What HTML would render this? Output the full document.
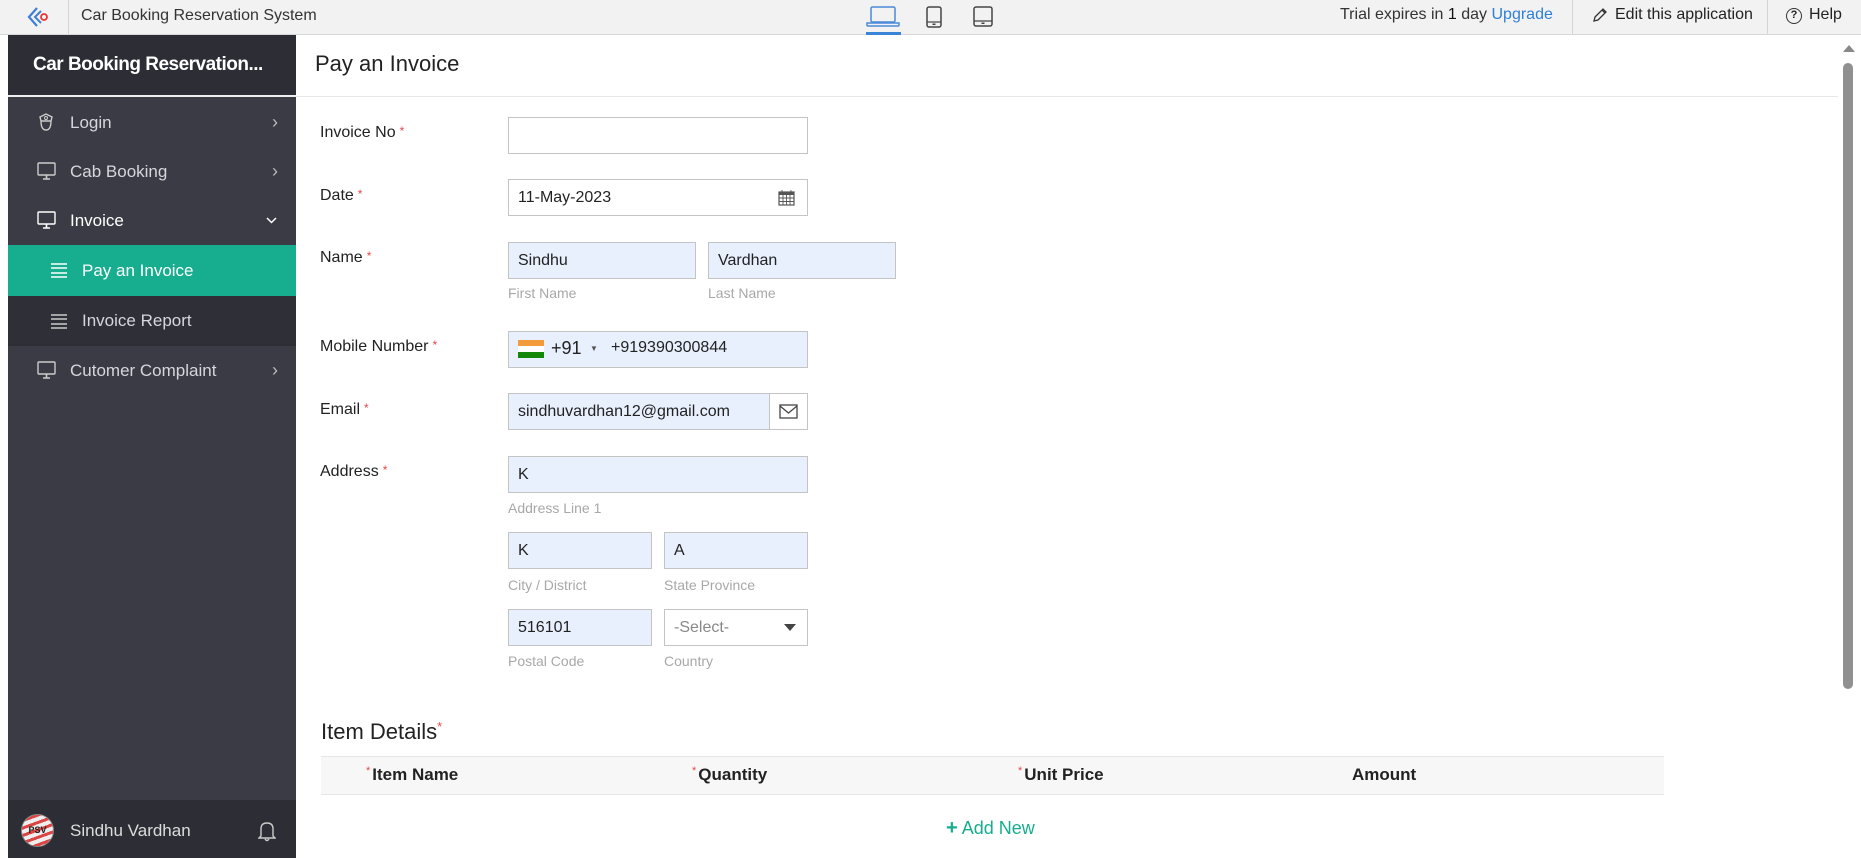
<!DOCTYPE html>
<html><head><meta charset="utf-8"><style>
*{box-sizing:border-box;margin:0;padding:0}
body{width:1861px;height:858px;overflow:hidden;font-family:"Liberation Sans",sans-serif;background:#fff;position:relative;color:#222}
.a{position:absolute}
.top{left:0;top:0;width:1861px;height:35px;background:#f2f2f2;border-bottom:1px solid #d8d8d8}
.sb{left:8px;top:35px;width:288px;height:823px;background:#3b3b45}
.mi{position:absolute;left:0;width:288px;height:49px;color:#d6d6dc;font-size:17px;line-height:49px}
.mi .t{position:absolute;left:62px}
.mi .ch{position:absolute;right:18px;font-size:18px;color:#bbb}
.lbl{position:absolute;left:320px;font-size:16px;color:#222}
.lbl i{color:#e5474a;font-style:normal;font-size:12px;vertical-align:top;margin-left:4px}
.in{position:absolute;height:37px;border:1px solid #c4c4c4;background:#e8f0fd;font-size:16px;line-height:35px;padding-left:9px;color:#222}
.hp{position:absolute;font-size:14px;color:#a8a8a8}
.th{position:absolute;top:765px;font-size:17px;font-weight:bold;color:#222}
.th i{color:#e5474a;font-style:normal;font-size:11px;vertical-align:top;font-weight:normal;margin-right:2px}
</style></head><body>
<div class="a top"></div>
<div class="a" style="left:68px;top:0;width:1px;height:34px;background:#d4d4d4"></div>
<svg class="a" style="left:26px;top:6px" width="24" height="22" viewBox="0 0 24 22"><path d="M11 2 L3 11 L11 20" fill="none" stroke="#3d7fd8" stroke-width="2.2"/><path d="M15 5 L9 11 L15 17" fill="none" stroke="#3d7fd8" stroke-width="2"/><circle cx="18" cy="11" r="3" fill="none" stroke="#e33" stroke-width="1.8"/></svg>
<div class="a" style="left:81px;top:7px;font-size:16px;color:#333">Car Booking Reservation System</div>
<svg class="a" style="left:866px;top:6px" width="34" height="22" viewBox="0 0 34 22"><rect x="5" y="1" width="24" height="15" rx="1.5" fill="none" stroke="#4a8ad8" stroke-width="1.5"/><path d="M1 17 H33 V19 Q33 20 32 20 H2 Q1 20 1 19 Z" fill="none" stroke="#4a8ad8" stroke-width="1.5"/></svg>
<div class="a" style="left:866px;top:32px;width:35px;height:3px;background:#3a86d6"></div>
<svg class="a" style="left:926px;top:6px" width="16" height="22" viewBox="0 0 16 22"><rect x="1" y="1" width="14" height="20" rx="2" fill="none" stroke="#444" stroke-width="1.5"/><path d="M1 16 H15" stroke="#444" stroke-width="1.2"/><rect x="6.5" y="17.5" width="3" height="1.5" fill="#444"/></svg>
<svg class="a" style="left:973px;top:6px" width="20" height="22" viewBox="0 0 20 22"><rect x="1" y="1" width="18" height="19" rx="2" fill="none" stroke="#444" stroke-width="1.5"/><path d="M1 15 H19" stroke="#444" stroke-width="1.2"/><rect x="8.5" y="16.5" width="3" height="1.5" fill="#444"/></svg>
<div class="a" style="left:1340px;top:6px;font-size:16px;color:#333">Trial expires in <span style="color:#111">1</span> day <span style="color:#2f80d6">Upgrade</span></div>
<div class="a" style="left:1572px;top:0;width:1px;height:34px;background:#d4d4d4"></div>
<svg class="a" style="left:1592px;top:7px" width="16" height="16" viewBox="0 0 16 16"><path d="M2 14 L3 10 L11 2 L14 5 L6 13 Z M10 3 L13 6" fill="none" stroke="#333" stroke-width="1.3"/></svg>
<div class="a" style="left:1615px;top:6px;font-size:16px;color:#222">Edit this application</div>
<div class="a" style="left:1767px;top:0;width:1px;height:34px;background:#d4d4d4"></div>
<div class="a" style="left:1786px;top:8px;width:16px;height:16px;border:1.4px solid #333;border-radius:50%;font-size:11px;text-align:center;line-height:13px;font-weight:bold">?</div>
<div class="a" style="left:1809px;top:6px;font-size:16px;color:#222">Help</div>

<div class="a sb">
 <div class="a" style="left:0;top:0;width:288px;height:62px;background:#2d2d35;border-bottom:2px solid #eee"></div>
 <div class="a" style="left:25px;top:19px;font-size:19px;font-weight:bold;color:#fff;letter-spacing:-0.5px">Car Booking Reservation...</div>
 <div class="mi" style="top:63px"><svg class="a" style="left:29px;top:15px" width="18" height="19" viewBox="0 0 18 19"><path d="M3 4 L9 1 L15 4 L14 8 Q14 17 9 17 Q4 17 4 8 Z M4 8 H14" fill="none" stroke="#ccc" stroke-width="1.4"/><circle cx="9" cy="5" r="1.5" fill="none" stroke="#ccc"/></svg><span class="t">Login</span><span class="ch">›</span></div>
 <div class="mi" style="top:112px"><svg class="a" style="left:29px;top:15px" width="19" height="19" viewBox="0 0 19 19"><rect x="1" y="1" width="17" height="12" rx="1" fill="none" stroke="#ccc" stroke-width="1.4"/><path d="M6 17 H13 M9.5 13 V17" stroke="#ccc" stroke-width="1.6"/></svg><span class="t">Cab Booking</span><span class="ch">›</span></div>
 <div class="mi" style="top:161px;color:#fff"><svg class="a" style="left:29px;top:15px" width="19" height="19" viewBox="0 0 19 19"><rect x="1" y="1" width="17" height="12" rx="1" fill="none" stroke="#fff" stroke-width="1.4"/><path d="M6 17 H13 M9.5 13 V17" stroke="#fff" stroke-width="1.6"/></svg><span class="t">Invoice</span><svg class="a" style="right:19px;top:21px" width="11" height="7" viewBox="0 0 11 7"><path d="M1 1 L5.5 5.5 L10 1" fill="none" stroke="#fff" stroke-width="1.5"/></svg></div>
 <div class="mi" style="top:210px;height:51px;line-height:51px;background:#16ae8e;color:#fff"><svg class="a" style="left:42px;top:18px" width="18" height="15" viewBox="0 0 18 15"><path d="M1 1 H17 M1 5 H17 M1 10 H17 M1 14 H17" stroke="#fff" stroke-width="1.4"/></svg><span class="t" style="left:74px">Pay an Invoice</span></div>
 <div class="mi" style="top:261px;height:50px;line-height:50px;background:#2f2f38"><svg class="a" style="left:42px;top:18px" width="18" height="15" viewBox="0 0 18 15"><path d="M1 1 H17 M1 5 H17 M1 10 H17 M1 14 H17" stroke="#ccc" stroke-width="1.4"/></svg><span class="t" style="left:74px">Invoice Report</span></div>
 <div class="mi" style="top:311px"><svg class="a" style="left:29px;top:15px" width="19" height="19" viewBox="0 0 19 19"><rect x="1" y="1" width="17" height="12" rx="1" fill="none" stroke="#ccc" stroke-width="1.4"/><path d="M6 17 H13 M9.5 13 V17" stroke="#ccc" stroke-width="1.6"/></svg><span class="t">Cutomer Complaint</span><span class="ch">›</span></div>
 <div class="a" style="left:0;top:765px;width:288px;height:58px;background:#2d2d35"></div>
 <div class="a" style="left:13px;top:779px;width:33px;height:33px;border-radius:50%;background:repeating-linear-gradient(160deg,#eee 0 4px,#d44 4px 7px);border:1px solid #888;font-size:9px;font-weight:bold;color:#222;text-align:center;line-height:31px">PSV</div>
 <div class="a" style="left:62px;top:786px;font-size:17px;color:#ddd">Sindhu Vardhan</div>
 <svg class="a" style="left:250px;top:785px" width="18" height="22" viewBox="0 0 18 22"><path d="M3 16 V9 Q3 3 9 3 Q15 3 15 9 V16 L17 18 H1 Z M7 19 Q9 22 11 19" fill="none" stroke="#ccc" stroke-width="1.4"/></svg>
</div>

<div class="a" style="left:315px;top:51px;font-size:22px;color:#222">Pay an Invoice</div>
<div class="a" style="left:296px;top:96px;width:1542px;height:1px;background:#e8e8e8"></div>
<div class="a" style="left:1840px;top:36px;width:21px;height:822px;background:#fff"></div>
<div class="a" style="left:1843px;top:45px;width:0;height:0;border-left:6px solid transparent;border-right:6px solid transparent;border-bottom:7px solid #888"></div>
<div class="a" style="left:1843px;top:63px;width:10px;height:626px;background:#909090;border-radius:5px"></div>

<div class="lbl" style="top:124px">Invoice No<i>*</i></div>
<div class="in" style="left:508px;top:117px;width:300px;background:#fff"></div>
<div class="lbl" style="top:187px">Date<i>*</i></div>
<div class="in" style="left:508px;top:179px;width:300px;background:#fff">11-May-2023</div>
<svg class="a" style="left:778px;top:189px" width="17" height="17" viewBox="0 0 17 17"><rect x="1" y="3" width="15" height="13" fill="none" stroke="#555" stroke-width="1.2"/><rect x="1" y="3" width="15" height="3" fill="#555"/><path d="M4 1V5M13 1V5M1 9H16M1 12.5H16M5 6V16M8.5 6V16M12 6V16" stroke="#555" stroke-width="0.9"/></svg>
<div class="lbl" style="top:249px">Name<i>*</i></div>
<div class="in" style="left:508px;top:242px;width:188px">Sindhu</div>
<div class="in" style="left:708px;top:242px;width:188px">Vardhan</div>
<div class="hp" style="left:508px;top:285px">First Name</div>
<div class="hp" style="left:708px;top:285px">Last Name</div>
<div class="lbl" style="top:338px">Mobile Number<i>*</i></div>
<div class="in" style="left:508px;top:331px;width:300px"></div>
<div class="a" style="left:518px;top:340px;width:26px;height:18px;background:linear-gradient(#f39b3a 0 33%,#fff 33% 66%,#138808 66%)"></div>
<div class="a" style="left:551px;top:338px;font-size:18px">+91</div>
<div class="a" style="left:590px;top:344px;font-size:8px;color:#555">▼</div>
<div class="a" style="left:611px;top:339px;font-size:16px">+919390300844</div>
<div class="lbl" style="top:401px">Email<i>*</i></div>
<div class="in" style="left:508px;top:393px;width:300px">sindhuvardhan12@gmail.com</div>
<div class="a" style="left:769px;top:393px;width:39px;height:37px;background:#fff;border:1px solid #c4c4c4"></div>
<svg class="a" style="left:779px;top:404px" width="19" height="15" viewBox="0 0 19 15"><rect x="1" y="1" width="17" height="13" fill="none" stroke="#444" stroke-width="1.3"/><path d="M1 2 L9.5 9 L18 2" fill="none" stroke="#444" stroke-width="1.3"/></svg>
<div class="lbl" style="top:463px">Address<i>*</i></div>
<div class="in" style="left:508px;top:456px;width:300px">K</div>
<div class="hp" style="left:508px;top:500px">Address Line 1</div>
<div class="in" style="left:508px;top:532px;width:144px">K</div>
<div class="in" style="left:664px;top:532px;width:144px">A</div>
<div class="hp" style="left:508px;top:577px">City / District</div>
<div class="hp" style="left:664px;top:577px">State Province</div>
<div class="in" style="left:508px;top:609px;width:144px">516101</div>
<div class="in" style="left:664px;top:609px;width:144px;background:#fff;color:#888">-Select-</div>
<div class="a" style="left:784px;top:624px;width:0;height:0;border-left:6px solid transparent;border-right:6px solid transparent;border-top:7px solid #444"></div>
<div class="hp" style="left:508px;top:653px">Postal Code</div>
<div class="hp" style="left:664px;top:653px">Country</div>

<div class="a" style="left:321px;top:719px;font-size:22px;color:#222">Item Details<span style="color:#e5474a;font-size:13px;vertical-align:top">*</span></div>
<div class="a" style="left:321px;top:756px;width:1343px;height:39px;background:#f7f7f7;border-top:1px solid #e6e6e6;border-bottom:1px solid #e6e6e6"></div>
<div class="th" style="left:366px"><i>*</i>Item Name</div>
<div class="th" style="left:692px"><i>*</i>Quantity</div>
<div class="th" style="left:1018px"><i>*</i>Unit Price</div>
<div class="th" style="left:1352px">Amount</div>
<div class="a" style="left:946px;top:817px;font-size:18px;color:#16ae8e"><b style="font-size:20px">+</b> Add New</div>
</body></html>
